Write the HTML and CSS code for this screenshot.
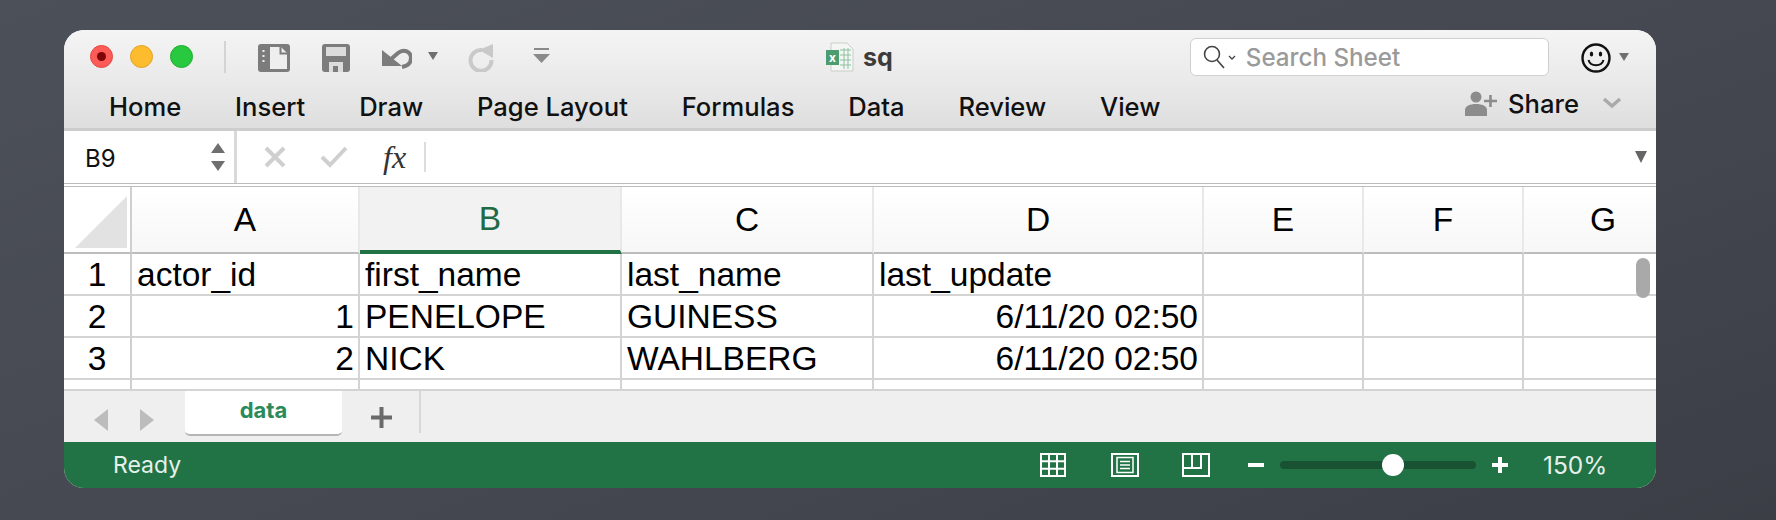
FILE: index.html
```html
<!DOCTYPE html>
<html lang="en">
<head>
  <meta charset="UTF-8">
  <title>sq</title>
  <link rel="stylesheet" href="styles.css">
</head>
<body>

  <div class="window">
    <div class="titlebar">
      <span class="light red"><i></i></span>
      <span class="light orange"></span>
      <span class="light green"></span>
      <span class="title-sep"></span>
      <svg class="ic-sidebar" width="32" height="28" viewBox="0 0 32 28"><rect x="1" y="1" width="30" height="26" rx="2" fill="#7c7c7c" stroke="#7c7c7c" stroke-width="2"/><path d="M12 3h11l6 6v16H12z" fill="#eeeeee"/><path d="M22.500 3v6.500H29" fill="none" stroke="#7c7c7c" stroke-width="2"/><path d="M5.500 6v2M5.500 11v2M5.500 16v2" stroke="#eee" stroke-width="2"/></svg>
      <svg class="ic-save" width="28" height="28" viewBox="0 0 28 28"><path d="M3 0h22a3 3 0 0 1 3 3v22a3 3 0 0 1-3 3H3a3 3 0 0 1-3-3V3a3 3 0 0 1 3-3z" fill="#7c7c7c"/><rect x="4" y="3" width="20" height="9" fill="#dcdcdc"/><path d="M7 28V18h14v10z" fill="#dcdcdc"/><rect x="11" y="22" width="5" height="6" fill="#7c7c7c"/></svg>
      <svg class="ic-undo" width="30" height="22" viewBox="0 0 30 22"><path d="M0 3v16h20z" fill="#7c7c7c"/><path d="M8 13l8-7c6-5 13-1 13 5 0 5-4 8-9 9" fill="none" stroke="#7c7c7c" stroke-width="4"/></svg>
      <span class="caret undo-caret"></span>
      <svg class="ic-redo" width="26" height="28" viewBox="0 0 26 28"><path d="M14 6A10.500 10.500 0 1 0 23.500 16" fill="none" stroke="#c9c9c9" stroke-width="4"/><path d="M25 0v14L11 6z" fill="#c9c9c9"/></svg>
      <svg class="ic-more" width="17" height="16" viewBox="0 0 17 16"><path d="M1 1h15" stroke="#8a8a8a" stroke-width="2"/><path d="M0 6h17l-8.500 9z" fill="#8a8a8a"/></svg>
      <div class="doc-title">
        <svg width="28" height="30" viewBox="0 0 28 30"><path d="M5 1h16l6 6v22H5z" fill="#f4f6f4" stroke="#c9cfc9"/><path d="M14 8h11M14 13h11M14 18h11M14 23h11M18 6v21M22 6v21" stroke="#8cc0a0"/><rect x="0" y="8" width="13" height="15" fill="#4b9d70"/><text x="3" y="20" class="doc-x">x</text></svg>
        <span>sq</span>
      </div>
      <div class="search">
        <svg width="24" height="24" viewBox="0 0 24 24"><circle cx="10" cy="9" r="7.500" fill="none" stroke="#444" stroke-width="1.600"/><path d="M15 15l7 8" stroke="#444" stroke-width="1.600"/></svg>
        <svg class="search-chev" width="8" height="6" viewBox="0 0 8 6"><path d="M1 1l3 3 3-3" fill="none" stroke="#444" stroke-width="1.300"/></svg>
        <span>Search Sheet</span>
      </div>
      <svg class="ic-smile" width="30" height="30" viewBox="0 0 30 30"><circle cx="15" cy="15" r="13.500" fill="none" stroke="#111" stroke-width="2.400"/><ellipse cx="10.500" cy="11" rx="1.700" ry="2.600" fill="#111"/><ellipse cx="19.500" cy="11" rx="1.700" ry="2.600" fill="#111"/><path d="M7.500 17c2 7 13 7 15 0" fill="none" stroke="#111" stroke-width="2"/></svg>
      <span class="caret smile-caret"></span>
    </div>

    <div class="menubar">
      <span>Home</span>
      <span>Insert</span>
      <span>Draw</span>
      <span>Page Layout</span>
      <span>Formulas</span>
      <span>Data</span>
      <span>Review</span>
      <span>View</span>
      <div class="share">
        <svg width="32" height="25" viewBox="0 0 32 25"><circle cx="11" cy="6" r="5.500" fill="#8c8c8c"/><path d="M0 25v-6c0-4 5-6 11-6s11 2 11 6v6z" fill="#8c8c8c"/><path d="M19 10h13M25.500 4v12" stroke="#8c8c8c" stroke-width="2.600"/></svg>
        <span>Share</span>
        <svg class="share-chev" width="20" height="12" viewBox="0 0 20 12"><path d="M2 2l8 7 8-7" fill="none" stroke="#aaa" stroke-width="3.500"/></svg>
      </div>
    </div>

    <div class="formula-bar">
      <div class="name-box">
        <span class="name-text">B9</span>
        <div class="stepper"><i class="up"></i><i class="down"></i></div>
      </div>
      <div class="formula-tools">
        <svg width="22" height="22" viewBox="0 0 22 22"><path d="M2 2l18 18M20 2L2 20" stroke="#cfcfcf" stroke-width="4"/></svg>
        <svg class="ic-check" width="28" height="22" viewBox="0 0 28 22"><path d="M2 11l8 8L26 2" fill="none" stroke="#cfcfcf" stroke-width="4"/></svg>
        <span class="fx">fx</span>
        <span class="fx-sep"></span>
      </div>
      <span class="formula-caret"></span>
    </div>

    <div class="sheet">
      <div class="grid">
        <div class="corner"><svg width="52" height="52" viewBox="0 0 52 52"><path d="M52 0v52H0z" fill="#e2e2e2"/></svg></div>
        <div class="col-head">A</div>
        <div class="col-head selected">B</div>
        <div class="col-head">C</div>
        <div class="col-head">D</div>
        <div class="col-head">E</div>
        <div class="col-head">F</div>
        <div class="col-head">G</div>

        <div class="row-head">1</div>
        <div class="cell">actor_id</div>
        <div class="cell">first_name</div>
        <div class="cell">last_name</div>
        <div class="cell">last_update</div>
        <div class="cell"></div>
        <div class="cell"></div>
        <div class="cell"></div>

        <div class="row-head">2</div>
        <div class="cell num">1</div>
        <div class="cell">PENELOPE</div>
        <div class="cell">GUINESS</div>
        <div class="cell num">6/11/20 02:50</div>
        <div class="cell"></div>
        <div class="cell"></div>
        <div class="cell"></div>

        <div class="row-head">3</div>
        <div class="cell num">2</div>
        <div class="cell">NICK</div>
        <div class="cell">WAHLBERG</div>
        <div class="cell num">6/11/20 02:50</div>
        <div class="cell"></div>
        <div class="cell"></div>
        <div class="cell"></div>

        <div class="row-head">4</div>
        <div class="cell"></div>
        <div class="cell"></div>
        <div class="cell"></div>
        <div class="cell"></div>
        <div class="cell"></div>
        <div class="cell"></div>
        <div class="cell"></div>
      </div>
      <div class="scroll-thumb"></div>
    </div>

    <div class="tabbar">
      <span class="arrow left"></span>
      <span class="arrow right"></span>
      <div class="tab">data</div>
      <svg class="ic-add" width="21" height="21" viewBox="0 0 21 21"><path d="M10.500 0v21M0 10.500h21" stroke="#6a6a6a" stroke-width="4"/></svg>
      <span class="tab-sep"></span>
    </div>

    <div class="statusbar">
      <span class="ready">Ready</span>
      <svg class="ic-normal" width="26" height="24" viewBox="0 0 26 24"><path d="M1 1h24v22H1zM9 1v22M17 1v22M1 8.300h24M1 15.700h24" fill="none" stroke="#fff" stroke-width="2"/></svg>
      <svg class="ic-page" width="28" height="24" viewBox="0 0 28 24"><path d="M1 1h26v22H1z" fill="none" stroke="#fff" stroke-width="2"/><path d="M6 4.500h16v15H6z" fill="none" stroke="#fff" stroke-width="1.500"/><path d="M9 8.500h10M9 12h10M9 15.500h10" stroke="#fff" stroke-width="1.500"/></svg>
      <svg class="ic-break" width="28" height="24" viewBox="0 0 28 24"><path d="M1 1h26v22H1zM1 15h18V1M10 1v14" fill="none" stroke="#fff" stroke-width="2"/></svg>
      <span class="zoom-minus"></span>
      <div class="slider"><i></i></div>
      <svg class="ic-plus" width="16" height="16" viewBox="0 0 16 16"><path d="M8 0v16M0 8h16" stroke="#fff" stroke-width="4"/></svg>
      <span class="zoom-pct">150%</span>
    </div>
  </div>

</body>
</html>
```

FILE: styles.css
```css
html, body {
  margin: 0;
  height: 520px;
  overflow: hidden;
}
body {
  background: linear-gradient(160deg, #4c5059 0%, #444750 60%, #3b3e45 100%);
  padding: 30px 120px 0 64px;
  box-sizing: border-box;
  font-family: "Inter", "Liberation Sans", sans-serif;
}
.window {
  width: 1592px;
  height: 458px;
  border-radius: 20px;
  overflow: hidden;
  background: #fff;
  display: flex;
  flex-direction: column;
}

/* title bar */
.titlebar {
  height: 54px;
  flex: none;
  padding-left: 26px;
  display: flex;
  align-items: center;
  background: linear-gradient(#f4f4f4, #e9e9e9);
  position: relative;
}
.light {
  width: 23px;
  height: 23px;
  border-radius: 50%;
  margin-right: 17px;
  margin-top: -2px;
  display: flex;
  align-items: center;
  justify-content: center;
  flex: none;
  box-sizing: border-box;
}
.red { background: #fc5b57; border: 1px solid #e1463f; }
.red i {
  width: 9px;
  height: 9px;
  border-radius: 50%;
  background: #7e0508;
}
.orange { background: #fdbc2e; border: 1px solid #e0a12a; }
.green { background: #28c83f; border: 1px solid #1eab2e; }
.title-sep {
  width: 2px;
  height: 32px;
  background: #d4d4d4;
  margin: 0 0 0 14px;
}
.ic-sidebar { margin: 1px 0 0 32px; }
.ic-save { margin: 1px 0 0 32px; }
.ic-undo { margin: 1px 0 0 32px; }
.caret {
  width: 0;
  height: 0;
  border-left: 5px solid transparent;
  border-right: 5px solid transparent;
  border-top: 8px solid #6f6f6f;
}
.undo-caret { margin: -2px 0 0 16px; }
.ic-redo { margin: 1px 0 0 30px; }
.ic-more { margin: -2px 0 0 39px; }
.doc-title {
  display: flex;
  align-items: center;
  gap: 9px;
  margin-left: 276px;
  font-size: 25px;
  font-weight: 700;
  color: #3c3c3c;
}
.doc-x {
  font-size: 12px;
  font-weight: 700;
  fill: #fff;
}
.search {
  margin-left: 297px;
  width: 359px;
  height: 38px;
  box-sizing: border-box;
  background: #fff;
  border: 1px solid #cfcfcf;
  border-radius: 6px;
  display: flex;
  align-items: center;
  padding-left: 11px;
  font-size: 24.2px;
  font-weight: 500;
  color: #9a9a9a;
}
.search-chev { margin: 2px 10px 0 2px; }
.ic-smile { margin: 2px 0 0 32px; }
.smile-caret { margin: 0 0 0 8px; }

/* menu row */
.menubar {
  height: 47px;
  flex: none;
  padding-left: 45px;
  box-sizing: border-box;
  border-bottom: 3px solid #cdcdcd;
  background: linear-gradient(#e9e9e9, #dedede);
  display: flex;
  align-items: center;
  gap: 53.8px;
  font-size: 25.6px;
  font-weight: 500;
  color: #111;
}
.share {
  margin-left: auto;
  margin-right: 34px;
  display: flex;
  align-items: center;
  margin-top: -6px;
}
.share span { margin: 0 23px 0 11px; }

/* formula bar */
.formula-bar {
  height: 56px;
  flex: none;
  box-sizing: border-box;
  border-bottom: 4px double #bcbcbc;
  display: flex;
  align-items: center;
  background: #fff;
  position: relative;
}
.name-box {
  height: 52px;
  border-right: 3px solid #d9d9d9;
  display: flex;
  align-items: center;
  justify-content: space-between;
  padding: 0 9px 0 21px;
  width: 140px;
  font-size: 24px;
  color: #111;
}
.name-text { padding-top: 3px; }
.stepper {
  display: flex;
  flex-direction: column;
  gap: 8px;
}
.stepper i {
  width: 0;
  height: 0;
  border-left: 7px solid transparent;
  border-right: 7px solid transparent;
}
.up { border-bottom: 10px solid #6f6f6f; }
.down { border-top: 10px solid #6f6f6f; }
.formula-tools {
  display: flex;
  align-items: center;
  margin-left: 27px;
}
.ic-check { margin-left: 34px; }
.fx {
  font-family: "Liberation Serif", serif;
  font-style: italic;
  font-size: 32px;
  color: #333;
  margin-left: 35px;
}
.fx-sep {
  width: 2px;
  height: 30px;
  background: #dcdcdc;
  margin-left: 18px;
}
.formula-caret {
  margin-left: auto;
  margin-right: 9px;
  width: 0;
  height: 0;
  border-left: 6px solid transparent;
  border-right: 6px solid transparent;
  border-top: 12px solid #666;
}

/* sheet */
.sheet {
  height: 204px;
  overflow: hidden;
  position: relative;
  border-bottom: 2px solid #d4d4d4;
  box-sizing: border-box;
  flex: none;
  font-family: "Liberation Sans", Arial, sans-serif;
  font-size: 33.5px;
  color: #000;
}
.grid {
  display: grid;
  grid-template-columns: 68px 228px 262px 252px 330px 160px 160px 160px;
  grid-template-rows: 67px 42px 42px 42px 42px;
}
.corner {
  border-right: 2px solid #cfcfcf;
  border-bottom: 2px solid #bdbdbd;
  display: flex;
  align-items: flex-end;
  justify-content: flex-end;
  padding: 0 3px 4px 0;
  box-sizing: border-box;
  background: #fff;
}
.col-head {
  border-right: 2px solid #e8e8e8;
  border-bottom: 2px solid #bdbdbd;
  background: linear-gradient(#fff, #f7f7f7);
  display: flex;
  align-items: center;
  justify-content: center;
  box-sizing: border-box;
}
.col-head.selected {
  background: #f2f2f2;
  color: #1e6b45;
  border-bottom: 4px solid #217346;
}
.row-head {
  border-right: 2px solid #cfcfcf;
  border-bottom: 2px solid #d4d4d4;
  display: flex;
  align-items: center;
  justify-content: center;
  box-sizing: border-box;
  padding-top: 2px;
}
.cell {
  border-right: 2px solid #d4d4d4;
  border-bottom: 2px solid #d4d4d4;
  box-sizing: border-box;
  display: flex;
  align-items: center;
  padding: 2px 4px 0 5px;
  white-space: nowrap;
}
.num { justify-content: flex-end; }
.scroll-thumb {
  position: absolute;
  left: 1572px;
  top: 71px;
  width: 14px;
  height: 40px;
  border-radius: 7px;
  background: #a9a9a9;
}

/* sheet tabs */
.tabbar {
  height: 51px;
  flex: none;
  background: #efefef;
  display: flex;
  align-items: flex-start;
  padding-left: 30px;
}
.arrow {
  width: 0;
  height: 0;
  margin-top: 18px;
  border-top: 11px solid transparent;
  border-bottom: 11px solid transparent;
}
.arrow.left { border-right: 14px solid #bcbcbc; }
.arrow.right { border-left: 14px solid #bcbcbc; margin-left: 32px; }
.tab {
  width: 157px;
  height: 45px;
  margin-left: 31px;
  box-sizing: border-box;
  background: #fff;
  border-bottom: 2px solid #b5b5b5;
  border-radius: 0 0 5px 5px;
  text-align: center;
  font-size: 22px;
  font-weight: 700;
  line-height: 38px;
  color: #2a8a5a;
}
.ic-add { margin: 16px 0 0 29px; }
.tab-sep {
  width: 2px;
  height: 42px;
  margin-left: 27px;
  background: #d8d8d8;
}

/* status bar */
.statusbar {
  flex: 1;
  background: #217346;
  display: flex;
  align-items: center;
  padding-left: 49px;
  color: #e6f0ea;
}
.ready { font-size: 23px; width: 927px; }
.ic-page { margin-left: 45px; }
.ic-break { margin-left: 43px; }
.zoom-minus {
  width: 16px;
  height: 4px;
  background: #fff;
  margin-left: 38px;
}
.slider {
  width: 196px;
  height: 8px;
  border-radius: 4px;
  background: #195233;
  margin-left: 16px;
  position: relative;
}
.slider i {
  position: absolute;
  left: 102px;
  top: -7px;
  width: 22px;
  height: 22px;
  border-radius: 50%;
  background: #fff;
}
.ic-plus { margin-left: 16px; }
.zoom-pct {
  font-size: 24.5px;
  margin-left: 35px;
}
```
